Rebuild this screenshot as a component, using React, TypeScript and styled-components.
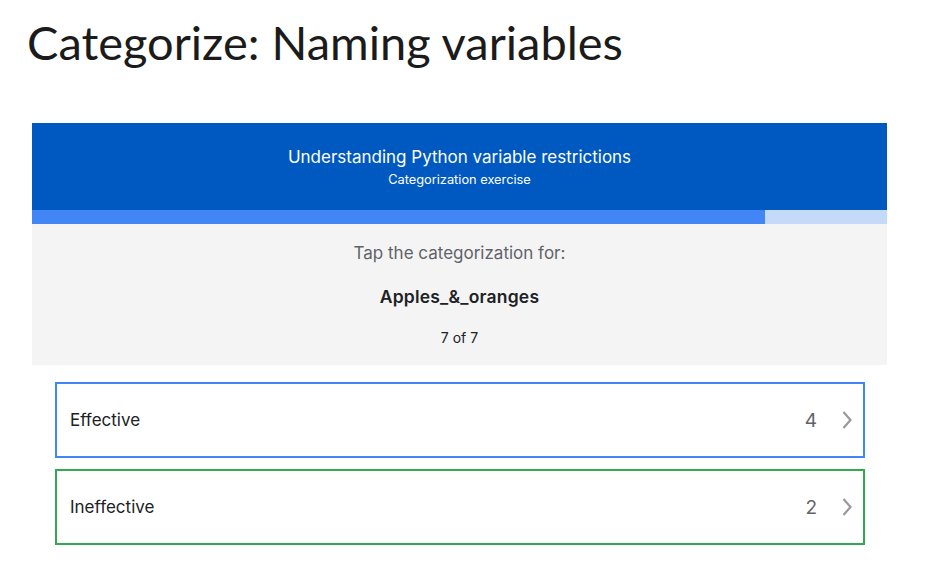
import React from "react";
import styled, { createGlobalStyle } from "styled-components";

const Global = createGlobalStyle`
  html, body { margin: 0; padding: 0; background: #ffffff; }
  body { font-family: "Inter", "Liberation Sans", sans-serif; }
`;

const Page = styled.div`
  padding: 0 51px 0 32px;
`;

const Title = styled.h1`
  margin: 0 0 0 -5px;
  padding: 12px 0 0 0;
  font-family: "Lato", "Open Sans", sans-serif;
  font-weight: 400;
  font-size: 47px;
  line-height: 60px;
  color: #1b1b1b;
  height: 123px;
  box-sizing: border-box;
`;

const Card = styled.section`
  width: 855px;
  font-family: "Inter", "Roboto", sans-serif;
`;

const Header = styled.header`
  background: #0059c1;
  height: 87px;
  display: flex;
  flex-direction: column;
  align-items: center;
  color: #ffffff;
  padding-top: 23px;
  box-sizing: border-box;
`;

const HeaderTitle = styled.div`
  font-size: 17px;
  line-height: 22px;
`;

const HeaderSub = styled.div`
  margin-top: 4px;
  font-size: 12.8px;
  line-height: 16px;
`;

const Progress = styled.div`
  height: 14px;
  background: #c5d9f8;
  display: flex;
`;

const ProgressFill = styled.div`
  background: #4285f4;
  height: 100%;
`;

const Prompt = styled.div`
  background: #f4f4f4;
  height: 141px;
  display: flex;
  flex-direction: column;
  align-items: center;
  padding-top: 18px;
  box-sizing: border-box;
`;

const PromptLabel = styled.div`
  font-size: 17px;
  line-height: 22px;
  color: #5f6368;
`;

const PromptItem = styled.div`
  margin-top: 22px;
  font-size: 17.5px;
  line-height: 22px;
  font-weight: 600;
  letter-spacing: 0.2px;
  color: #202124;
`;

const PromptCount = styled.div`
  margin-top: 21px;
  font-size: 14px;
  line-height: 18px;
  color: #202124;
`;

const Options = styled.div`
  display: flex;
  flex-direction: column;
  gap: 11px;
  padding: 17px 22px 0 23px;
`;

const Option = styled.button<{ $color: string }>`
  all: unset;
  box-sizing: border-box;
  height: 76px;
  border: 2px solid ${(p) => p.$color};
  display: flex;
  align-items: center;
  padding: 0 10px 0 13px;
  cursor: pointer;
  font-family: "Inter", "Roboto", sans-serif;
`;

const OptionLabel = styled.span`
  flex: 1;
  font-size: 17px;
  color: #202124;
`;

const OptionCount = styled.span`
  font-size: 19px;
  color: #5f6368;
  margin-right: 24px;
`;

const Chevron = () => (
  <svg width="12" height="20" viewBox="0 0 12 20" aria-hidden="true">
    <path d="M2.5 2 L9.5 10 L2.5 18" fill="none" stroke="#9a9a9a" strokeWidth="2.2" />
  </svg>
);

const options = [
  { label: "Effective", count: 4, color: "#4285f4" },
  { label: "Ineffective", count: 2, color: "#34a853" },
];

export default function App() {
  const progress = 6 / 7;
  return (
    <Page>
      <Global />
      <Title>Categorize: Naming variables</Title>
      <Card>
        <Header>
          <HeaderTitle>Understanding Python variable restrictions</HeaderTitle>
          <HeaderSub>Categorization exercise</HeaderSub>
        </Header>
        <Progress>
          <ProgressFill style={{ width: `${progress * 100}%` }} />
        </Progress>
        <Prompt>
          <PromptLabel>Tap the categorization for:</PromptLabel>
          <PromptItem>Apples_&_oranges</PromptItem>
          <PromptCount>7 of 7</PromptCount>
        </Prompt>
        <Options>
          {options.map((o) => (
            <Option key={o.label} $color={o.color}>
              <OptionLabel>{o.label}</OptionLabel>
              <OptionCount>{o.count}</OptionCount>
              <Chevron />
            </Option>
          ))}
        </Options>
      </Card>
    </Page>
  );
}
